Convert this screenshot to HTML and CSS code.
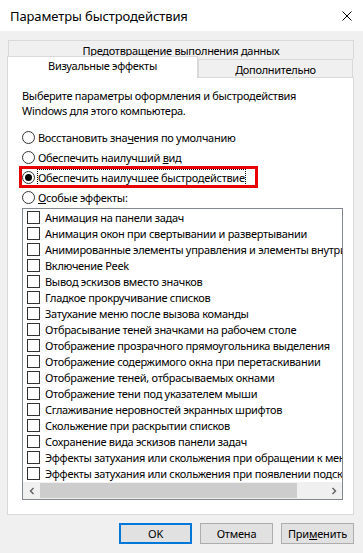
FILE: index.html
```html
<!DOCTYPE html>
<html lang="ru">
<head>
  <meta charset="UTF-8" />
  <title>Параметры быстродействия</title>
  <link rel="stylesheet" href="styles.css">
</head>
<body>
  <div class="window">
    <div class="titlebar">
      <span class="title">Параметры быстродействия</span>
      <svg class="close" width="10" height="10" viewBox="0 0 10 10">
        <path d="M0.5 0.5 L9.5 9.5 M9.5 0.5 L0.5 9.5" stroke="#000" stroke-width="1" fill="none"/>
      </svg>
    </div>

    <div class="content">
      <div class="tabs">
        <div class="tabrow back">
          <div class="tab">Предотвращение выполнения данных</div>
        </div>
        <div class="tabrow front">
          <div class="tab active">Визуальные эффекты</div>
          <div class="tab">Дополнительно</div>
        </div>
      </div>

      <div class="panel">
        <p class="intro">Выберите параметры оформления и быстродействия<br>Windows для этого компьютера.</p>

        <div class="radios">
          <div class="radio"><span class="dot"></span><span>Восстановить зна<u>ч</u>ения по умолчанию</span></div>
          <div class="radio"><span class="dot"></span><span>Обеспечить наилучший <u>в</u>ид</span></div>
          <div class="radio marked"><span class="dot checked"></span><span class="focus">Обеспечить наилучшее быстродействие</span></div>
          <div class="radio"><span class="dot"></span><span><u>О</u>собые эффекты:</span></div>
        </div>

        <div class="listbox">
          <ul class="items">
            <li><span class="box"></span>Анимация на панели задач</li>
            <li><span class="box"></span>Анимация окон при свертывании и развертывании</li>
            <li><span class="box"></span>Анимированные элементы управления и элементы внутри окна</li>
            <li><span class="box"></span>Включение Peek</li>
            <li><span class="box"></span>Вывод эскизов вместо значков</li>
            <li><span class="box"></span>Гладкое прокручивание списков</li>
            <li><span class="box"></span>Затухание меню после вызова команды</li>
            <li><span class="box"></span>Отбрасывание теней значками на рабочем столе</li>
            <li><span class="box"></span>Отображение прозрачного прямоугольника выделения</li>
            <li><span class="box"></span>Отображение содержимого окна при перетаскивании</li>
            <li><span class="box"></span>Отображение теней, отбрасываемых окнами</li>
            <li><span class="box"></span>Отображение тени под указателем мыши</li>
            <li><span class="box"></span>Сглаживание неровностей экранных шрифтов</li>
            <li><span class="box"></span>Скольжение при раскрытии списков</li>
            <li><span class="box"></span>Сохранение вида эскизов панели задач</li>
            <li><span class="box"></span>Эффекты затухания или скольжения при обращении к меню</li>
            <li><span class="box"></span>Эффекты затухания или скольжения при появлении подсказок</li>
          </ul>
          <div class="hscroll">
            <div class="arrow">
              <svg width="8" height="8" viewBox="0 0 8 8"><path d="M5.5 1 L2.5 4 L5.5 7" stroke="#606060" stroke-width="1.4" fill="none"/></svg>
            </div>
            <div class="track"><div class="thumb"></div></div>
            <div class="arrow">
              <svg width="8" height="8" viewBox="0 0 8 8"><path d="M2.5 1 L5.5 4 L2.5 7" stroke="#606060" stroke-width="1.4" fill="none"/></svg>
            </div>
          </div>
        </div>
      </div>

      <div class="buttons">
        <button class="default">OK</button>
        <button>Отмена</button>
        <button>При<u>м</u>енить</button>
      </div>
    </div>
  </div>
</body>
</html>
```

FILE: styles.css
```css
* {
  box-sizing: border-box;
}

body {
  margin: 0;
  font-family: 'Noto Sans', sans-serif;
  font-size: 11px;
  letter-spacing: -0.3px;
  color: #000;
  background: #f0f0f0;
}

.window {
  width: 363px;
  height: 553px;
  background: #f0f0f0;
}

.titlebar {
  height: 31px;
  background: #fff;
  display: flex;
  align-items: center;
  justify-content: space-between;
  padding: 0 11px 0 10px;
}
.title {
  font-size: 13px;
  letter-spacing: -0.1px;
}

.content {
  padding: 9px 9px 0 7px;
}

/* tabs */
.tabrow {
  display: flex;
}
.tab {
  text-align: center;
  border: 1px solid #d9d9d9;
  border-bottom: none;
  background: #f0f0f0;
}
.back .tab {
  flex: 1;
  height: 19px;
  line-height: 20px;
  margin: 0 0 0 1px;
}
.front {
  height: 22px;
  margin-top: -3px;
  align-items: flex-end;
}
.front .tab {
  flex: 1;
  height: 19px;
  line-height: 19px;
  border-bottom: 1px solid #d9d9d9;
  margin-right: 1px;
}
.front .tab.active {
  flex: none;
  width: 191px;
  height: 22px;
  line-height: 17px;
  background: #fff;
  border-bottom: none;
  margin-right: 0;
  position: relative;
  z-index: 1;
}

.panel {
  margin-top: -1px;
  background: #fff;
  border: 1px solid #d9d9d9;
  height: 438px;
  padding: 10px 10px 0 14px;
}

.intro {
  margin: 0;
  line-height: 15px;
}

/* radios */
.radios {
  margin-top: 11px;
  display: flex;
  flex-direction: column;
  align-items: flex-start;
  gap: 4px;
}
.radio {
  display: flex;
  align-items: center;
  height: 16px;
  gap: 3px;
}
.radio.marked {
  outline: 3px solid #e60000;
  padding-right: 10px;
}
.dot {
  width: 13px;
  height: 13px;
  border: 1px solid #333;
  border-radius: 50%;
  background: #fff;
  position: relative;
}
.dot.checked::after {
  content: "";
  position: absolute;
  left: 2px;
  top: 2px;
  width: 7px;
  height: 7px;
  border-radius: 50%;
  background: #000;
}
.focus {
  outline: 1px dotted #000;
  line-height: 15px;
}

/* listbox */
.listbox {
  margin-top: 3px;
  border: 1px solid #828790;
  height: 292px;
  display: flex;
  flex-direction: column;
}
.items {
  list-style: none;
  margin: 0;
  padding: 0;
  flex: 1;
  overflow: hidden;
}
.items li {
  height: 16px;
  display: flex;
  align-items: center;
  gap: 5px;
  padding-left: 4px;
  white-space: nowrap;
}
.box {
  flex: none;
  width: 13px;
  height: 13px;
  border: 1px solid #333;
  background: #fff;
}

.hscroll {
  height: 17px;
  background: #f0f0f0;
  display: flex;
}
.arrow {
  width: 17px;
  display: flex;
  align-items: center;
  justify-content: center;
}
.track {
  flex: 1;
  display: flex;
  align-items: center;
}
.thumb {
  width: 257px;
  height: 15px;
  background: #cdcdcd;
}

/* buttons */
.buttons {
  display: flex;
  justify-content: flex-end;
  gap: 8px;
  margin-top: 8px;
}
button {
  width: 73px;
  height: 21px;
  padding: 0;
  font-family: inherit;
  font-size: 11px;
  letter-spacing: -0.2px;
  color: #000;
  background: #e1e1e1;
  border: 1px solid #adadad;
}
button.default {
  border: 2px solid #0078d7;
}
```
